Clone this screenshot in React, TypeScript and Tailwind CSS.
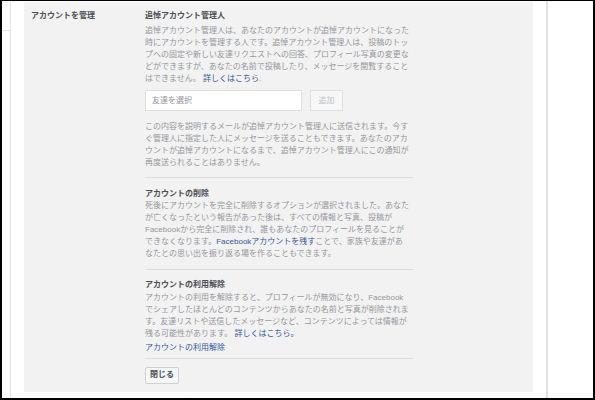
import React from "react";

const body = "text-[#94979d]";
const link = "text-[#365899]";

const Lines = ({ lines }: { lines: React.ReactNode[] }) => (
  <div className={`${body} leading-[12px]`}>
    {lines.map((l, i) => (
      <div key={i} className="whitespace-nowrap">
        {l}
      </div>
    ))}
  </div>
);

const Divider = () => <div className="h-px w-[268px] bg-[#dadde1]" />;

const Heading = ({ children }: { children: React.ReactNode }) => (
  <div className="font-bold text-[#4b4f56] leading-[11px]">{children}</div>
);

export default function App() {
  return (
    <div className="w-[595px] h-[400px] overflow-hidden border-t border-l-2 border-r-2 border-b-2 border-black bg-white font-[family-name:'Liberation_Sans','Noto_Sans_CJK_JP',sans-serif] text-[8px]">
      <div className="flex h-full">
        {/* left strip */}
        <div className="w-[9px] shrink-0 border-r border-[#e2e2e2]">
          <div className="mt-[29px] h-px bg-[#e2e2e2]" />
        </div>
        <div className="w-[13px] shrink-0" />

        {/* settings panel */}
        <div className="w-[509px] shrink-0 flex flex-col">
          <div className="mt-px bg-[#f2f2f2] flex pt-[7.5px] pb-[8px]">
            <div className="w-[121px] shrink-0 pl-[7px]">
              <Heading>アカウントを管理</Heading>
            </div>

            <div className="w-[268px] flex flex-col">
              {/* memorial contact */}
              <Heading>追悼アカウント管理人</Heading>
              <div className="mt-[4.5px]">
                <Lines
                  lines={[
                    "追悼アカウント管理人は、あなたのアカウントが追悼アカウントになった",
                    "時にアカウントを管理する人です。追悼アカウント管理人は、投稿のトッ",
                    "プへの固定や新しい友達リクエストへの回答、プロフィール写真の変更な",
                    "どができますが、あなたの名前で投稿したり、メッセージを閲覧すること",
                    <>
                      はできません。 <span className={link}>詳しくはこちら</span>.
                    </>,
                  ]}
                />
              </div>

              <div className="mt-[5px] flex gap-[8px]">
                <div className="w-[157px] h-[21px] bg-white border border-[#dddfe2] flex items-center pl-[6px] text-[#90949c]">
                  友達を選択
                </div>
                <div className="w-[33px] h-[21px] bg-[#f6f7f9] border border-[#dddfe2] flex items-center justify-center text-[#bec2c9]">
                  追加
                </div>
              </div>

              <div className="mt-[10px] mb-[8px]">
                <Lines
                  lines={[
                    "この内容を説明するメールが追悼アカウント管理人に送信されます。今す",
                    "ぐ管理人に指定した人にメッセージを送ることもできます。あなたのアカ",
                    "ウントが追悼アカウントになるまで、追悼アカウント管理人にこの通知が",
                    "再度送られることはありません。",
                  ]}
                />
              </div>
              <Divider />

              {/* deletion */}
              <div className="pt-[9.5px] pb-[8.5px]">
                <Heading>アカウントの削除</Heading>
                <div className="mt-[1.5px]">
                  <Lines
                    lines={[
                      "死後にアカウントを完全に削除するオプションが選択されました。あなた",
                      "が亡くなったという報告があった後は、すべての情報と写真、投稿が",
                      "Facebookから完全に削除され、誰もあなたのプロフィールを見ることが",
                      <>
                        できなくなります。<span className={link}>Facebookアカウントを残す</span>ことで、家族や友達があ
                      </>,
                      "なたとの思い出を振り返る場を作ることもできます。",
                    ]}
                  />
                </div>
              </div>
              <Divider />

              {/* deactivation */}
              <div className="pt-[9.5px] pb-[5px]">
                <Heading>アカウントの利用解除</Heading>
                <div className="mt-[1.5px]">
                  <Lines
                    lines={[
                      "アカウントの利用を解除すると、プロフィールが無効になり、Facebook",
                      "でシェアしたほとんどのコンテンツからあなたの名前と写真が削除されま",
                      "す。友達リストや送信したメッセージなど、コンテンツによっては情報が",
                      <>
                        残る可能性があります。 <span className={link}>詳しくはこちら。</span>
                      </>,
                    ]}
                  />
                </div>
                <div className={`${link} mt-[2.5px] leading-[11px]`}>アカウントの利用解除</div>
              </div>
              <Divider />

              <div className="mt-[7.5px]">
                <button className="w-[34px] h-[17px] rounded-[2px] bg-[#f6f7f9] border border-[#ced0d4] font-bold text-[#4b4f56] flex items-center justify-center">
                  閉じる
                </button>
              </div>
            </div>
          </div>

          {/* next row, clipped by the frame */}
          <div className="mt-[5px] flex text-[#90949c] leading-[11px]">
            <div className="w-[121px] pl-[7px]">アカウントのセキュリティ</div>
            <div>ログイン通知、パスワード変更などのセキュリティ設定</div>
          </div>
        </div>

        <div className="w-[13px] shrink-0" />
        <div className="w-[2px] shrink-0 bg-[#e2e2e2]" />
        <div className="flex-1" />
      </div>
    </div>
  );
}
